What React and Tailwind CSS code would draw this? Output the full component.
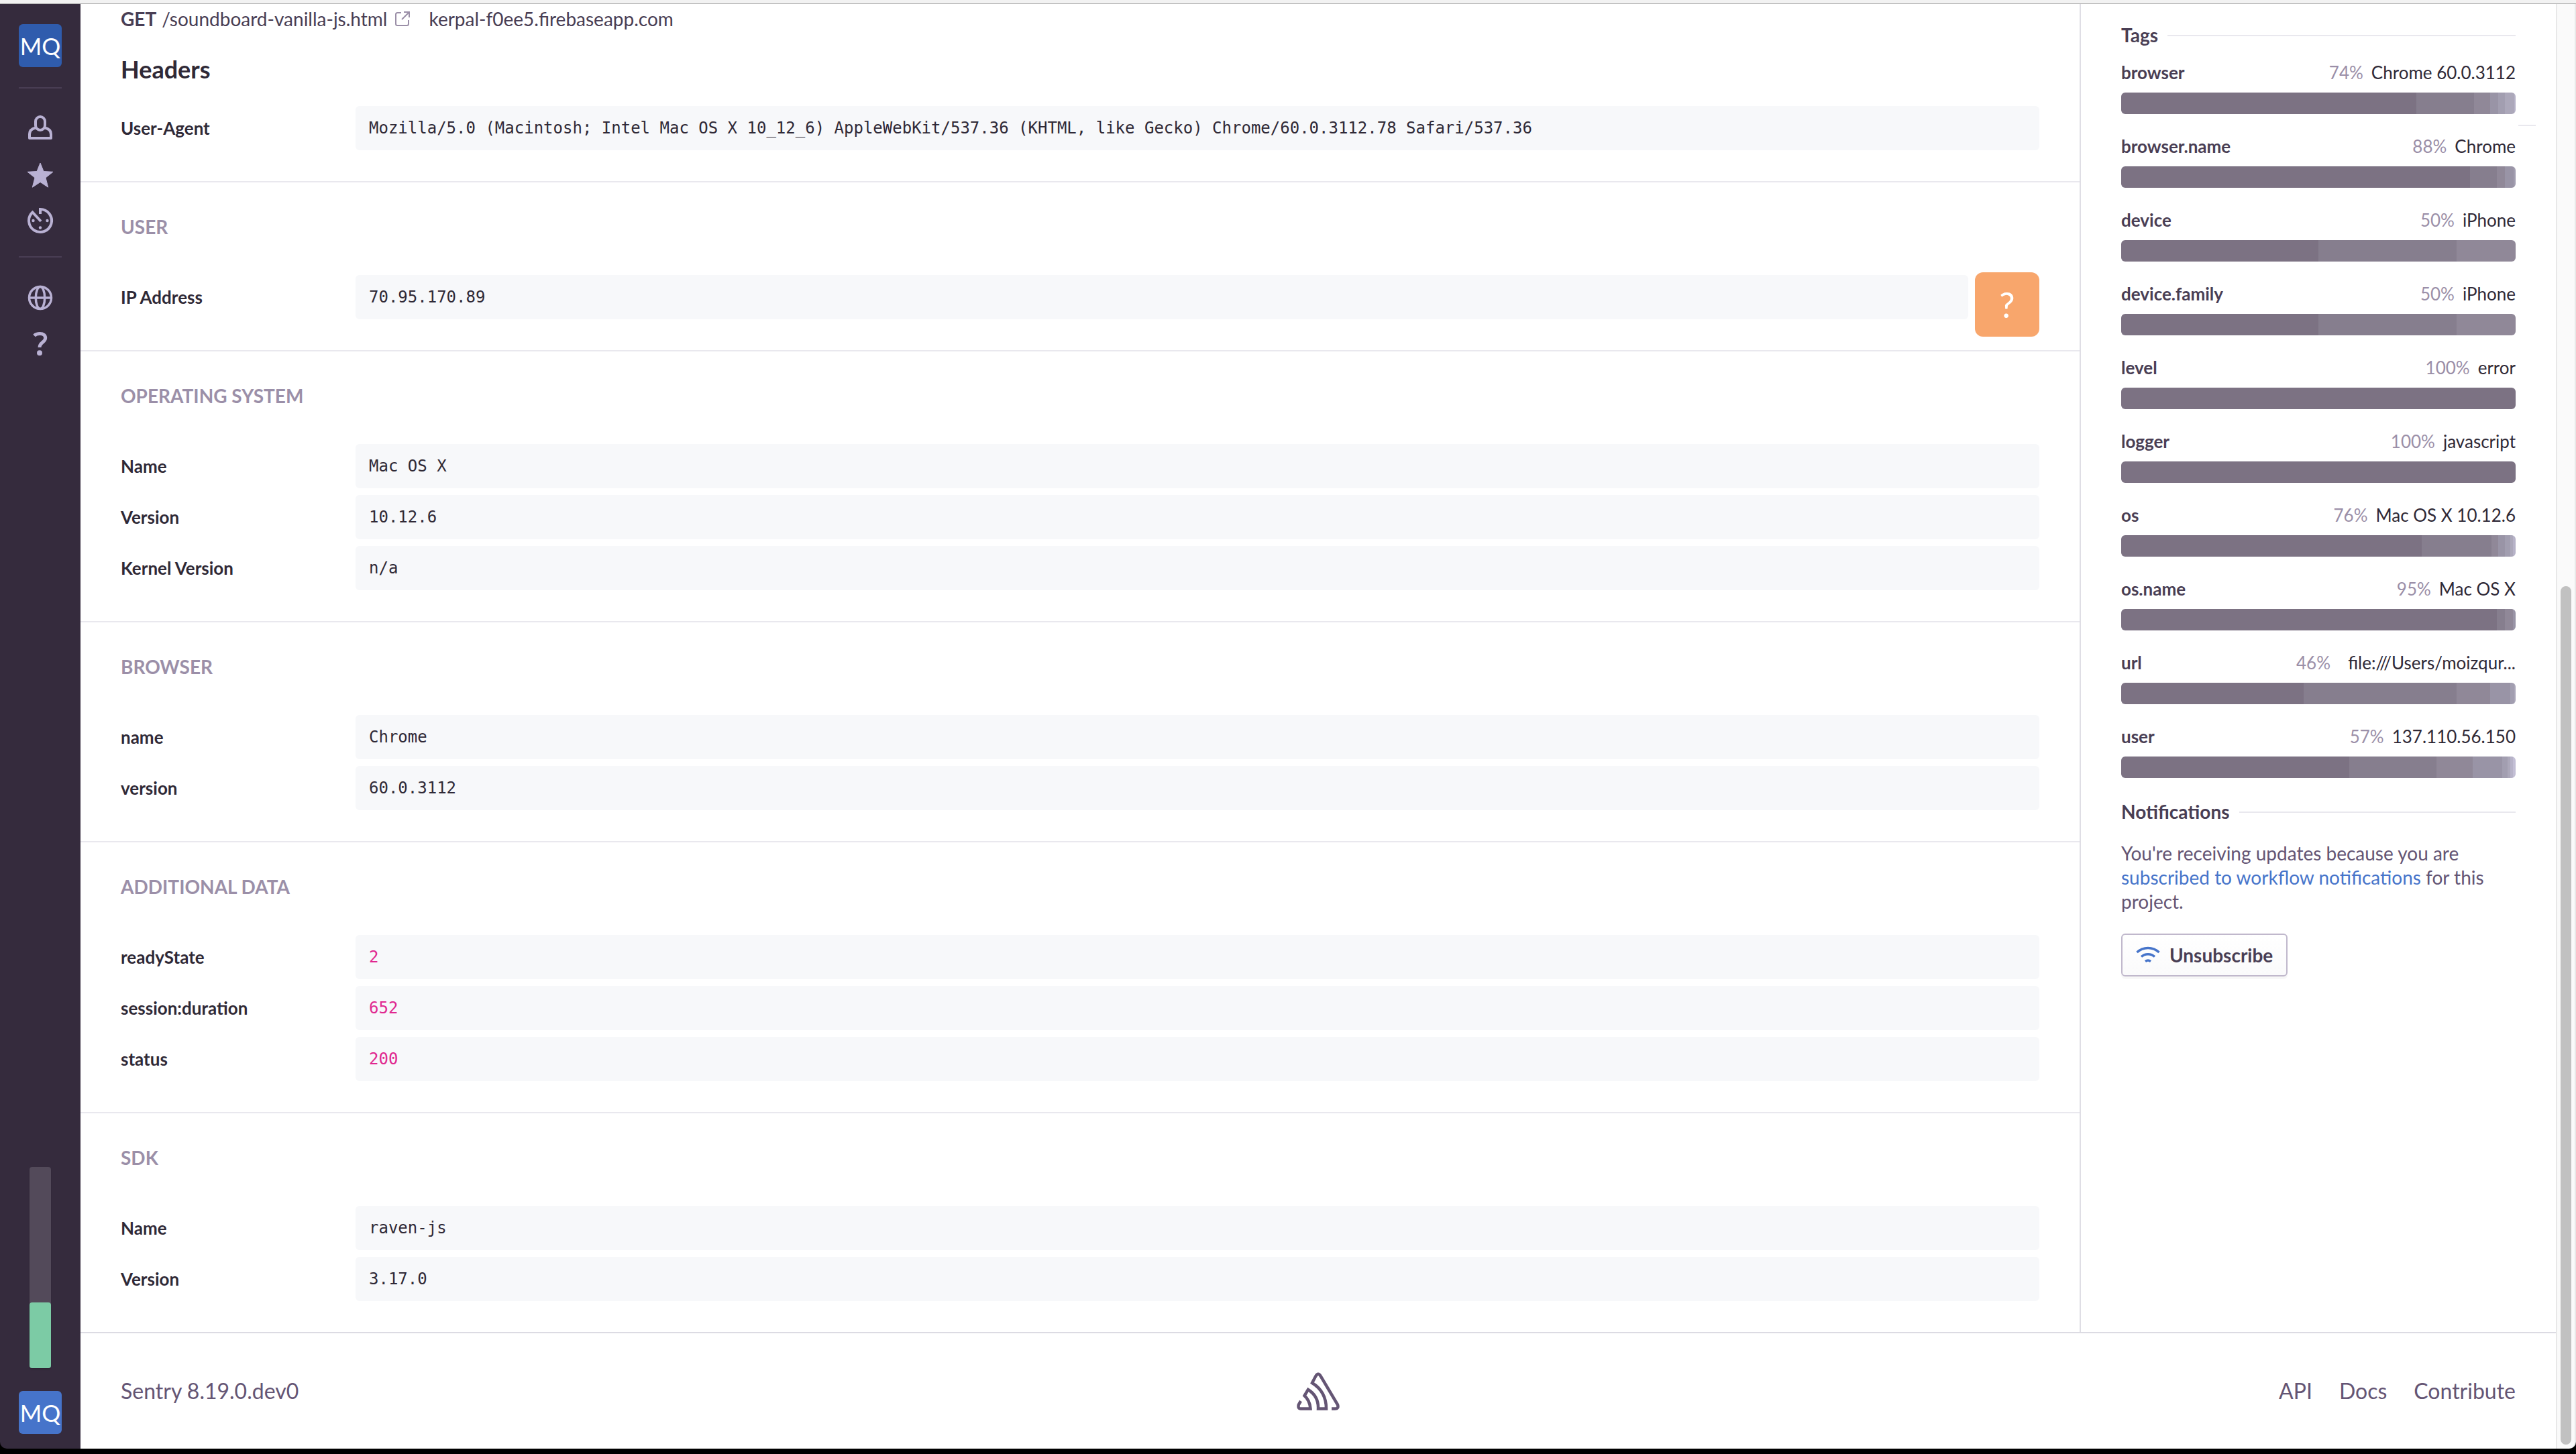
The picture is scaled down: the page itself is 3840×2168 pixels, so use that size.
const MAIN_FONT = "font-['Lato',sans-serif]";

const sections = [
  { title: 'User', avatar: true, rows: [['IP Address', '70.95.170.89']] },
  { title: 'Operating System', rows: [['Name', 'Mac OS X'], ['Version', '10.12.6'], ['Kernel Version', 'n/a']] },
  { title: 'Browser', rows: [['name', 'Chrome'], ['version', '60.0.3112']] },
  { title: 'Additional Data', numeric: true, rows: [['readyState', '2'], ['session:duration', '652'], ['status', '200']] },
  { title: 'SDK', rows: [['Name', 'raven-js'], ['Version', '3.17.0']] },
];

const tags = [
  ['browser', '74%', 'Chrome 60.0.3112', [440, 86, 24, 12, 10, 14, 2]],
  ['browser.name', '88%', 'Chrome', [520, 40, 12, 13, 3]],
  ['device', '50%', 'iPhone', [294, 206, 88]],
  ['device.family', '50%', 'iPhone', [294, 206, 88]],
  ['level', '100%', 'error', [588]],
  ['logger', '100%', 'javascript', [588]],
  ['os', '76%', 'Mac OS X 10.12.6', [448, 104, 10, 10, 8, 4, 4]],
  ['os.name', '95%', 'Mac OS X', [560, 12, 12, 4]],
  ['url', '46%', 'file:///Users/moizqur...', [272, 228, 50, 30, 6, 2]],
  ['user', '57%', '137.110.56.150', [340, 130, 54, 44, 8, 4, 4, 4]],
];

const shades = ['bg-[#7c7283]', 'bg-[#867e8e]', 'bg-[#908898]', 'bg-[#9994a6]', 'bg-[#a29eb0]', 'bg-[#aca8ba]', 'bg-[#b7b3c8]', 'bg-[#c3bfd5]'];

function Initials({ color }) {
  return (
    <a href="#account" className={`flex size-16 items-center justify-center rounded-md text-[35px] leading-none text-white ${color}`}>
      MQ
    </a>
  );
}

function Sidebar() {
  return (
    <nav className="flex w-[120px] shrink-0 flex-col items-center rounded-bl-[10px] bg-[#352b3d] pt-[30px] pb-[22px] text-[#b9b1d3]">
      <Initials color="bg-[#2f5cad]" />
      <hr className="mt-[30px] w-16 border-t-2 border-[#493e54]" />
      <a href="#assigned" aria-label="Assigned to me" className="mt-[38px]">
        <svg className="size-10" viewBox="0 0 40 40" fill="none" stroke="currentColor" strokeWidth="4" strokeLinejoin="round">
          <path d="M13 17V11a7 7 0 0 1 14 0v6a7 7 0 0 1-14 0Z" />
          <path d="M13 20.500C7 22 4 25 4 30v6h32v-6c0-5-3-8-9-9.500" />
        </svg>
      </a>
      <a href="#bookmarks" aria-label="Bookmarks" className="mt-[31px]">
        <svg className="size-10" viewBox="0 0 40 40" fill="currentColor" stroke="currentColor" strokeLinejoin="round">
          <path d="M20 2l5 12.500 14 .8-11 8.700 3.700 14.200L20 30.500 8.300 38.200 12 24l-11-8.700L15 14.500Z" />
        </svg>
      </a>
      <a href="#history" aria-label="History" className="mt-[28px]">
        <svg className="size-10" viewBox="0 0 40 40" fill="none" stroke="currentColor" strokeWidth="4">
          <path d="M20 10V3a17 17 0 1 1-11.500 4.500L21 21" />
          <g fill="currentColor" stroke="none">
            <circle cx="9.500" cy="20" r="2.200" />
            <circle cx="30.500" cy="20" r="2.200" />
            <circle cx="20" cy="30.500" r="2.200" />
          </g>
        </svg>
      </a>
      <hr className="mt-[33px] w-16 border-t-2 border-[#493e54]" />
      <a href="#status" aria-label="Status" className="mt-10">
        <svg className="size-10" viewBox="0 0 40 40" fill="none" stroke="currentColor" strokeWidth="3.500">
          <circle cx="20" cy="20" r="16.500" />
          <ellipse cx="20" cy="20" rx="6.700" ry="16.500" />
          <path d="M3 20h34" />
        </svg>
      </a>
      <a href="#help" aria-label="Help" className="mt-[29px]">
        <svg className="size-10" viewBox="0 0 40 40" fill="none" stroke="currentColor" strokeWidth="5">
          <path d="M11 7.500C13 5.500 16 4.500 19.500 4.500c5 0 8.200 2.300 8.200 6.500 0 6.500-8.700 6-8.700 14" />
          <circle cx="19" cy="33.300" r="4" fill="currentColor" stroke="none" />
        </svg>
      </a>
      <div className="mt-auto flex h-[300px] w-8 flex-col justify-end rounded bg-[#534a5a] shadow-[0_2px_2px_rgba(0,0,0,0.15)]">
        <div className="h-[98px] rounded bg-[#7ccba5]" />
      </div>
      <div className="mt-[34px]">
        <Initials color="bg-[#4674ca]" />
      </div>
    </nav>
  );
}

function Row({ name, value, numeric, avatar }) {
  return (
    <div className="flex items-start">
      <dt className="w-[350px] shrink-0 text-[26px] leading-[66px] font-bold text-[#2f2936]">{name}</dt>
      <dd className={`h-[66px] min-w-0 flex-1 rounded-md bg-[#f7f8fa] px-5 font-['DejaVu_Sans_Mono',monospace] text-[24px] leading-[66px] ${numeric ? 'text-[#e0288f]' : 'text-[#2f2936]'}`}>
        {value}
      </dd>
      {avatar && (
        <dd className="-mt-1 -mb-[26px] ml-2.5 flex size-24 shrink-0 items-center justify-center rounded-xl bg-[#f8a66c] text-[52px] leading-none text-white">?</dd>
      )}
    </div>
  );
}

function Heading({ children }) {
  return (
    <h6 className="flex items-center gap-3.5 text-[28px] leading-9 font-bold text-[#493e54]">
      {children}
      <span className="mt-0.5 h-0.5 flex-1 bg-[#e9e8ee]" />
    </h6>
  );
}

function Tag({ name, percent, value, parts }) {
  return (
    <div>
      <div className="flex justify-between text-[26px] leading-8">
        <span className="font-bold text-[#493e54]">{name}</span>
        <a href={`#${name}`} className="flex gap-3 text-[#2f2936]">
          <span className="text-[#9b8fa8]">{percent}</span>
          <span className={value.endsWith('...') ? 'min-w-[264px] text-right' : ''}>{value}</span>
        </a>
      </div>
      <div className="mt-3.5 flex h-8 overflow-hidden rounded-md">
        {parts.map((part, i) => (
          <div key={i} className={shades[i]} style={{ flexGrow: part }} />
        ))}
      </div>
    </div>
  );
}

function Aside() {
  return (
    <aside className="relative w-[710px] shrink-0 border-l-2 border-[#dfdee5] px-[60px] pt-7">
      <span className="absolute top-[180px] right-[30px] h-0.5 w-[26px] bg-[#e9e8ee]" />
      <Heading>Tags</Heading>
      <div className="mt-[22px] flex flex-col gap-8">
        {tags.map(([name, percent, value, parts]) => (
          <Tag key={name} name={name} percent={percent} value={value} parts={parts} />
        ))}
      </div>
      <div className="mt-8">
        <Heading>Notifications</Heading>
      </div>
      <p className="mt-[26px] text-[28px] leading-9 text-[#645574]">
        You're receiving updates because you are{' '}
        <a href="#workflow" className="text-[#4674ca]">subscribed to workflow notifications</a> for this project.
      </p>
      <button type="button" className="mt-[30px] flex h-16 items-center gap-3.5 rounded-md border-2 border-[#c0b8cc] bg-linear-to-b from-white to-[#fafafb] px-5 text-[28px] font-bold text-[#493e54] shadow-[0_4px_0_rgba(0,0,0,0.03)]">
        <svg className="size-9" viewBox="0 0 36 36" fill="none" stroke="#4674ca" strokeWidth="3.500">
          <path d="M1.500 14a24 24 0 0 1 33 0M8 20.500a15 15 0 0 1 20 0M14 27.500q4-3 8 0" />
        </svg>
        Unsubscribe
      </button>
    </aside>
  );
}

function Footer() {
  return (
    <footer className="grid flex-1 grid-cols-3 items-center border-t-2 border-[#dcdbe3] px-[60px] text-[32px] leading-10 text-[#645574]">
      <span>Sentry 8.19.0.dev0</span>
      <a href="#home" aria-label="Sentry" className="justify-self-center">
        <svg className="h-[58px] w-16" viewBox="0 0 64 58" fill="none" stroke="currentColor" strokeWidth="4.500">
          <path d="M6 44L2.800 49.500Q1.500 55.500 6 55.500H20.500Q19.500 43 11.500 36L17 27C28 34 32.500 44 32 55.500H44C44 38 36 25 23 17L28 7.500Q32 0 36 7.500L61 49.500Q63 55.500 57 55.500H52" />
        </svg>
      </a>
      <div className="flex gap-10 justify-self-end">
        <a href="#api">API</a>
        <a href="#docs">Docs</a>
        <a href="#contribute">Contribute</a>
      </div>
    </footer>
  );
}

export default function App() {
  return (
    <div className={`flex min-h-screen flex-col border-b-8 border-black bg-black ${MAIN_FONT}`}>
      <div className="h-1.5 border-b border-[#b0b0b0] bg-[#f2f2f2]" />
      <div className="flex flex-1">
        <Sidebar />
        <div className="flex min-w-0 flex-1 flex-col bg-white">
          <div className="flex">
            <main className="min-w-0 flex-1">
              <section className="px-[60px] pt-1 pb-[46px]">
                <div className="flex items-center text-[28px] leading-9 text-[#493e54]">
                  <strong>GET</strong>
                  <a href="#source" className="ml-2 flex items-center gap-3">
                    /soundboard-vanilla-js.html
                    <svg className="size-[22px]" viewBox="0 0 22 22" fill="none" stroke="#9b8fa8" strokeWidth="2">
                      <path d="M9 2H3.500Q1 2 1 4.500v14Q1 21 3.500 21h14q2.500 0 2.500-2.500V13M13 1h8v8M21 1L10 12" />
                    </svg>
                  </a>
                  <span className="ml-7">kerpal-f0ee5.firebaseapp.com</span>
                </div>
                <h3 className="mt-9 mb-[34px] text-[36px] leading-[42px] font-bold text-[#2f2936]">Headers</h3>
                <dl>
                  <Row
                    name="User-Agent"
                    value="Mozilla/5.0 (Macintosh; Intel Mac OS X 10_12_6) AppleWebKit/537.36 (KHTML, like Gecko) Chrome/60.0.3112.78 Safari/537.36"
                  />
                </dl>
              </section>
              {sections.map((s) => (
                <section key={s.title} className="border-t-2 border-[#e9e8ee] px-[60px] pt-12 pb-[46px]">
                  <h3 className="mb-[54px] text-[28px] leading-9 font-bold text-[#9b8fa8] uppercase">{s.title}</h3>
                  <dl className="flex flex-col gap-2.5">
                    {s.rows.map(([name, value]) => (
                      <Row key={name} name={name} value={value} numeric={s.numeric} avatar={s.avatar} />
                    ))}
                  </dl>
                </section>
              ))}
            </main>
            <Aside />
          </div>
          <Footer />
        </div>
        <div className="flex w-[30px] shrink-0 flex-col items-center rounded-br-[10px] border-x-2 border-[#e8e8e8] bg-[#fafafa] pb-1.5">
          <div className="mt-[868px] w-4 flex-1 rounded-full bg-[#c1c1c1]" />
        </div>
      </div>
    </div>
  );
}
